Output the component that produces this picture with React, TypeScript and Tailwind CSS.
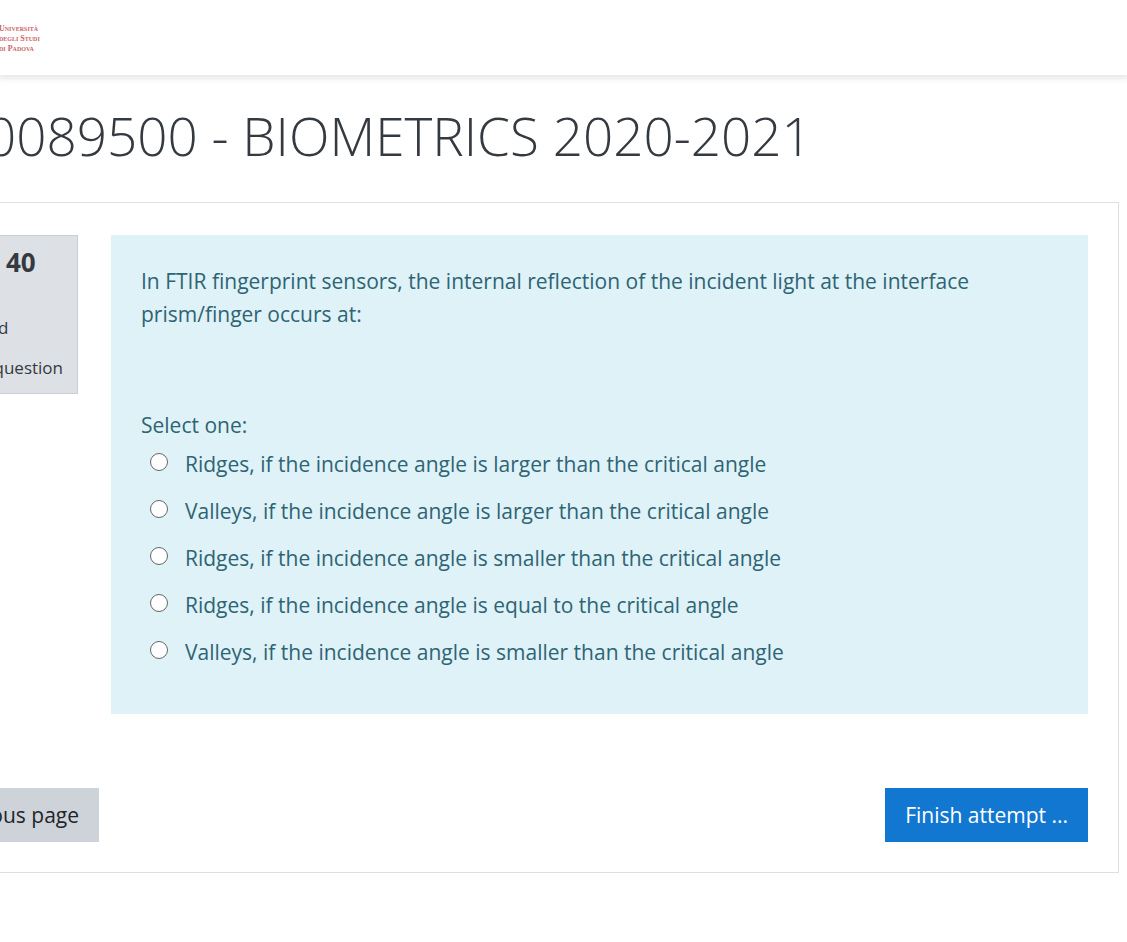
const options = [
  "Ridges, if the incidence angle is larger than the critical angle",
  "Valleys, if the incidence angle is larger than the critical angle",
  "Ridges, if the incidence angle is smaller than the critical angle",
  "Ridges, if the incidence angle is equal to the critical angle",
  "Valleys, if the incidence angle is smaller than the critical angle",
];

function Header() {
  return (
    <header className="h-[75px] bg-white pt-6 shadow-[0_2px_6px_2px_rgba(0,0,0,0.09)]">
      <div className="-ml-px whitespace-nowrap font-['Liberation_Serif',serif] text-[8px] font-bold leading-[10px] text-[#cc5f68] [font-variant-caps:small-caps]">
        <div>Università</div>
        <div>degli Studi</div>
        <div>di Padova</div>
      </div>
    </header>
  );
}

function QuestionInfo() {
  return (
    <aside className="flex h-[159px] w-[78px] shrink-0 flex-col overflow-hidden border border-l-0 border-[#cacfd7] bg-[#dde0e5] text-[#343a40]">
      <h2 className="mt-2 pl-[6px] text-[26px] font-bold leading-9">40</h2>
      <div className="mt-8 -ml-[2px] text-[17px] leading-8">d</div>
      <a href="#flag" className="mt-2 flex justify-end pr-[14px] text-[17px] leading-8">
        question
      </a>
    </aside>
  );
}

function Question() {
  return (
    <section className="min-w-0 flex-1 bg-[#def2f8] px-[30px] pb-[38px] pt-[30px] text-[21px] leading-[33px] text-[#2f6473]">
      <p>
        In FTIR fingerprint sensors, the internal reflection of the incident light at the interface
        prism/finger occurs at:
      </p>
      <fieldset className="mt-[78px]">
        <legend className="float-left w-full leading-[32px]">Select one:</legend>
        <div className="clear-both">
          {options.map((text, i) => (
            <label key={text} htmlFor={`answer${i}`} className="flex items-start py-[7px] pl-[9px]">
              <input
                id={`answer${i}`}
                type="radio"
                name="answer"
                className="mr-[17px] mt-[5px] size-[18px] shrink-0 appearance-none rounded-full border border-[#666666] bg-white checked:border-[5px] checked:border-[#1177d1]"
              />
              {text}
            </label>
          ))}
        </div>
      </fieldset>
    </section>
  );
}

export default function App() {
  return (
    <div className="overflow-x-hidden bg-white font-['Open_Sans','Noto_Sans',sans-serif]">
      <Header />
      <h1 className="-ml-[14px] mt-[25px] whitespace-nowrap text-[53px] font-light leading-[72px] text-[#343a40]">
        0089500 - BIOMETRICS 2020-2021
      </h1>
      <main className="mb-[69px] mr-2 mt-[30px] border border-l-0 border-[#dedfe0] pb-[30px] pr-[30px] pt-8">
        <div className="flex items-start gap-[33px]">
          <QuestionInfo />
          <Question />
        </div>
        <div className="mt-[74px] flex justify-between text-[21px] leading-[54px]">
          <button type="button" className="flex w-[99px] justify-end overflow-hidden whitespace-nowrap bg-[#ced3da] pr-5 text-[#212529]">
            ous page
          </button>
          <button type="button" className="whitespace-nowrap bg-[#1177d1] px-5 text-white">
            Finish attempt ...
          </button>
        </div>
      </main>
    </div>
  );
}
